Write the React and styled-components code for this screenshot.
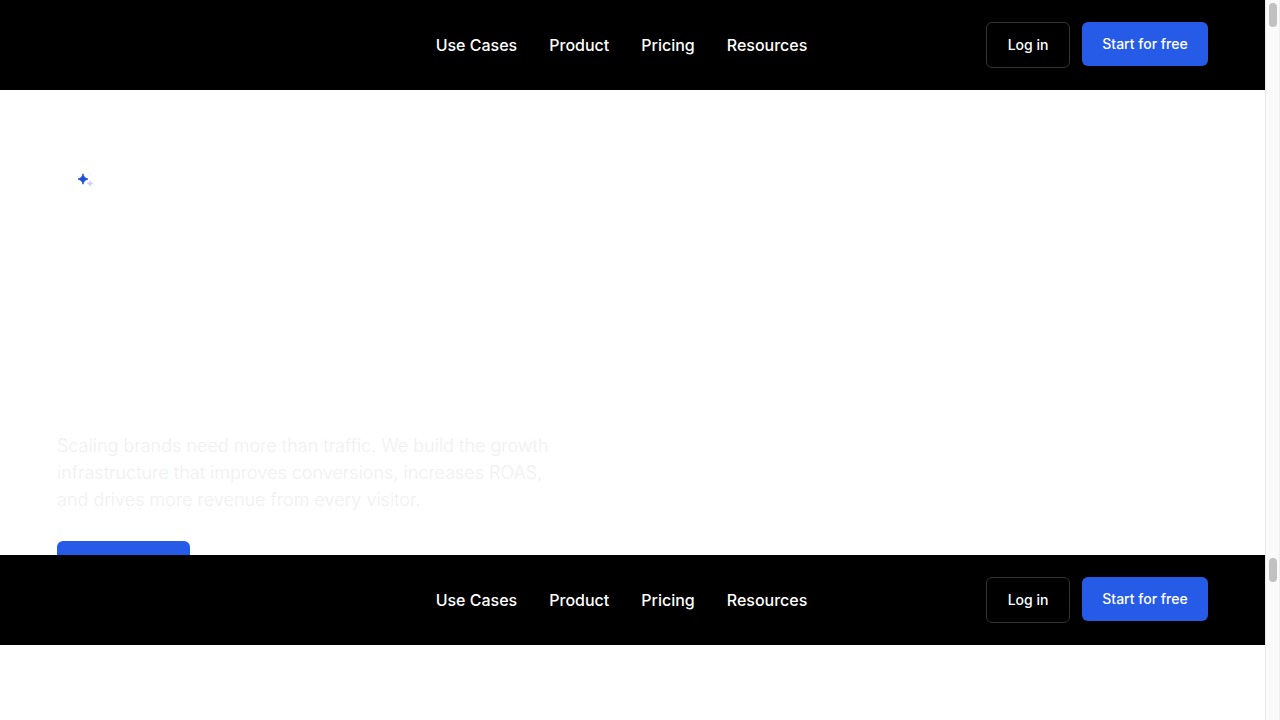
import React from 'react';
import styled, { createGlobalStyle } from 'styled-components';

const GlobalStyle = createGlobalStyle`
  *, *::before, *::after {
    box-sizing: border-box;
  }
  body {
    margin: 0;
    overflow: hidden;
    background: #ffffff;
    font-family: Inter, 'Liberation Sans', sans-serif;
  }
  #root {
    height: 100vh;
  }
`;

const PageStyles = styled.div`
  display: grid;
  grid-template-rows: 555px 1fr;
  height: 100%;
`;

const FrameStyles = styled.section`
  display: grid;
  grid-template-columns: 1fr 15px;
  min-height: 0;
  overflow: hidden;
`;

const FrameBody = styled.div`
  min-width: 0;
`;

const ScrollTrack = styled.div`
  background: #fafafa;
  border-left: 1px solid #e8e8e8;
  border-right: 1px solid #efefef;
  padding: 3px 2px 3px 3px;
`;

const ScrollThumb = styled.div`
  height: 24px;
  background: #c1c1c1;
  border-radius: 4px;
`;

const HeaderStyles = styled.header`
  display: flex;
  justify-content: space-between;
  align-items: center;
  padding: 22px 57px;
  background: #000000;
`;

const LogoLink = styled.a`
  width: 200px;
  height: 40px;
`;

const NavList = styled.ul`
  display: flex;
  gap: 32px;
  margin: 0;
  padding: 0;
  list-style: none;
`;

const NavLink = styled.a`
  color: #ffffff;
  font-size: 16px;
  font-weight: 450;
  line-height: 24px;
  text-decoration: none;
`;

const Actions = styled.div`
  display: flex;
  align-items: flex-start;
  gap: 12px;
`;

const Button = styled.button`
  min-width: ${({ $width }) => $width}px;
  padding: 12px 19px;
  border: ${({ $outline }) => ($outline ? '1px solid #333333' : '0')};
  border-radius: 6px;
  background: ${({ $outline }) => ($outline ? '#000000' : '#265be8')};
  color: #ffffff;
  font-family: inherit;
  font-size: 14px;
  font-weight: 500;
  line-height: 20px;
  min-height: 44px;
  white-space: nowrap;
`;

const HeroStyles = styled.main`
  padding: 70px 57px 0;
`;

const Badge = styled.div`
  display: flex;
  align-items: center;
  height: 38px;
  padding: 0 19px;
`;

const HeroText = styled.p`
  max-width: 520px;
  margin: 234px 0 28px;
  color: #f0f0f0;
  font-size: 18px;
  font-weight: 300;
  line-height: 27px;
`;

const SparkIcon = () => (
  <svg width="18" height="18" viewBox="0 0 18 18" aria-hidden="true">
    <path
      d="M7 3.8C7.8 7 8.8 8 12 9C8.8 10.2 7.8 11.1 7 14.2C6.2 11.1 5.2 10.2 2 9C5.2 8 6.2 7 7 3.8Z"
      fill="#1d4fd0"
      stroke="#1d4fd0"
      strokeWidth="0.8"
    />
    <path
      d="M14 10.4C14.4 12.2 15 12.9 17 13.5C15 14.1 14.4 14.8 14 16.6C13.6 14.8 13 14.1 11 13.5C13 12.9 13.6 12.2 14 10.4Z"
      fill="#cdcdfa"
      stroke="#cdcdfa"
      strokeWidth="0.4"
    />
    <path d="M14 1.6L14.6 3.4L16.2 4L14.6 4.6L14 6.4L13.4 4.6L11.8 4L13.4 3.4Z" fill="#f3f5ff" />
  </svg>
);

const navItems = ['Use Cases', 'Product', 'Pricing', 'Resources'];

const Header = () => (
  <HeaderStyles>
    <LogoLink href="/" aria-label="Home" />
    <nav>
      <NavList>
        {navItems.map((item) => (
          <li key={item}>
            <NavLink href="#">{item}</NavLink>
          </li>
        ))}
      </NavList>
    </nav>
    <Actions>
      <Button type="button" $width={84} $outline>
        Log in
      </Button>
      <Button type="button" $width={126}>
        Start for free
      </Button>
    </Actions>
  </HeaderStyles>
);

const Hero = () => (
  <HeroStyles>
    <Badge>
      <SparkIcon />
    </Badge>
    <HeroText>
      Scaling brands need more than traffic. We build the growth
      <br />
      infrastructure that improves conversions, increases ROAS,
      <br />
      and drives more revenue from every visitor.
    </HeroText>
    <Button type="button" $width={133} aria-label="Get started" />
  </HeroStyles>
);

const Frame = ({ children }) => (
  <FrameStyles>
    <FrameBody>
      <Header />
      {children}
    </FrameBody>
    <ScrollTrack>
      <ScrollThumb />
    </ScrollTrack>
  </FrameStyles>
);

const App = () => (
  <>
    <GlobalStyle />
    <PageStyles>
      <Frame>
        <Hero />
      </Frame>
      <Frame />
    </PageStyles>
  </>
);

export default App;
